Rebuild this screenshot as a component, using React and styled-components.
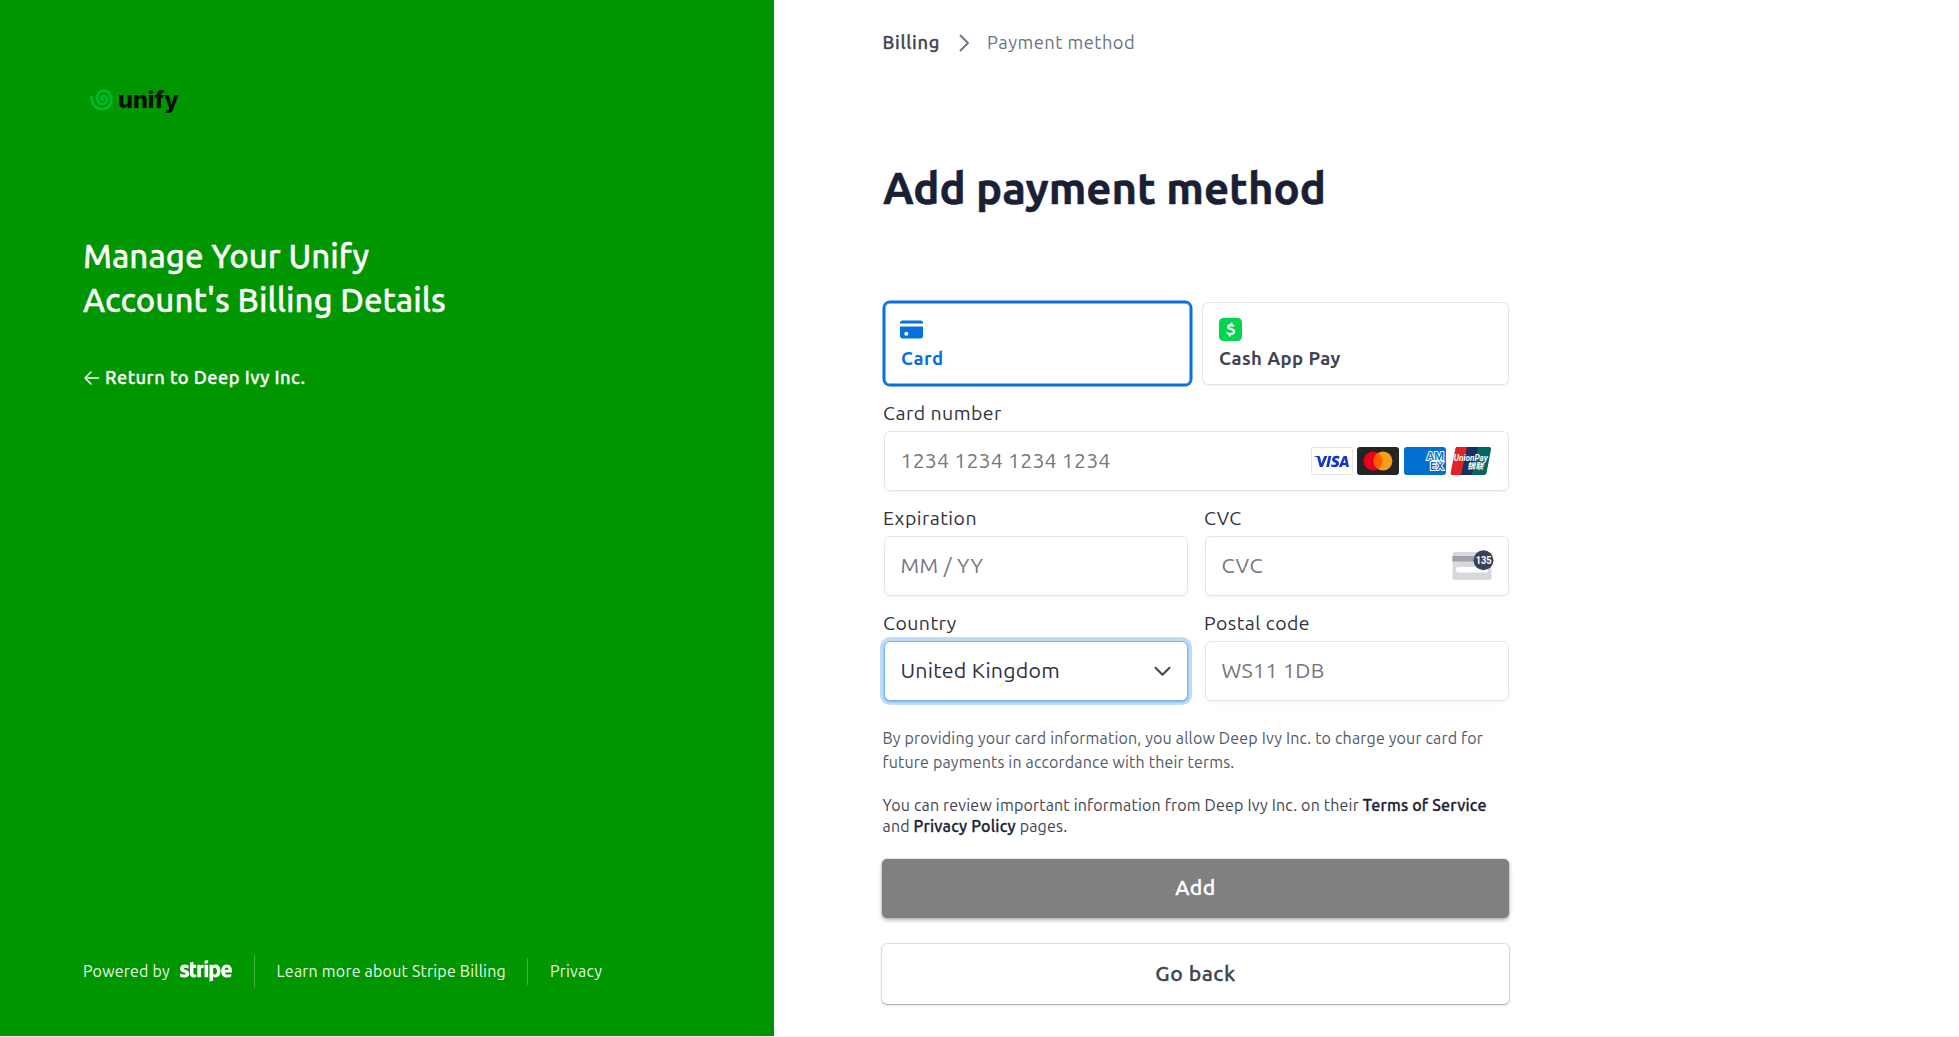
import React from 'react';
import styled, { createGlobalStyle, css } from 'styled-components';
import { FaStripe } from 'react-icons/fa';
import { SiVisa } from 'react-icons/si';

const GlobalStyle = createGlobalStyle`
  *, *::before, *::after { box-sizing: border-box; }
  body {
    margin: 0;
    background: #fff;
    font-family: Ubuntu, "Noto Sans", "Open Sans", sans-serif;
    overflow: hidden;
  }
  h1, h2, p { margin: 0; }
  svg { display: block; flex: none; }
`;

const Page = styled.div`
  display: flex;
  height: 1037px;
  border-bottom: 1px solid #f3f3f4;
`;

const Track = styled.span`
  letter-spacing: ${({ $by }) => $by}px;
`;

const sturdy = css`
  font-weight: 500;
  -webkit-text-stroke: 0.3px currentColor;
`;

/* ---------- Brand panel ---------- */

const Sidebar = styled.aside`
  display: flex;
  flex-direction: column;
  flex: none;
  width: 774px;
  padding: 88px 0 48px 83px;
  background: #009600;
  box-shadow: inset -14px 0 14px -14px rgba(0, 60, 0, 0.12);
  color: #fff;
`;

const Brand = styled.div`
  display: flex;
  align-items: center;
  gap: 5px;
  height: 24px;
  padding-left: 7px;
  color: #0a0f0a;
  font: 800 23.5px/24px Inter, sans-serif;
`;

const Headline = styled.h2`
  ${sturdy}
  margin-top: 122px;
  font-size: 33px;
  line-height: 43.5px;
  white-space: nowrap;
`;

const ReturnLink = styled.a`
  ${sturdy}
  display: flex;
  align-items: center;
  gap: 6px;
  margin-top: 43.5px;
  font-size: 18.3px;
  line-height: 24px;
  letter-spacing: 0.45px;

  svg { margin: 3px 0 0 1px; }
`;

const Footer = styled.footer`
  display: flex;
  align-items: center;
  height: 34px;
  margin-top: auto;
  color: rgba(255, 255, 255, 0.94);
  font-size: 16px;
  line-height: 34px;
  letter-spacing: 0.21px;
  white-space: nowrap;
`;

const Powered = styled.div`
  display: flex;
  align-items: center;
  gap: 10px;
  height: 33px;
  padding-right: 22px;
  border-right: 1px solid rgba(255, 255, 255, 0.25);
`;

const StripeMark = styled(FaStripe)`
  width: 52px;
  height: 41.5px;
  color: #fff;
`;

const FooterLink = styled.a`
  padding: 0 21.5px;
`;

const ShortRule = styled.span`
  width: 1px;
  height: 27px;
  background: rgba(255, 255, 255, 0.25);
`;

/* ---------- Payment form ---------- */

const Main = styled.main`
  display: flex;
  flex-direction: column;
  width: 735px;
  padding: 30px 0 0 110px;
`;

const Breadcrumb = styled.nav`
  display: flex;
  align-items: center;
  height: 25px;
  margin-left: -1.5px;
  color: #414552;
  font-size: 18.3px;
  line-height: 25px;
  white-space: nowrap;

  svg { margin: 0 17.5px 0 18.5px; }
`;

const Crumb = styled.a`
  ${sturdy}
  letter-spacing: 0.7px;
`;

const Current = styled.span`
  color: #6a7383;
  font-weight: 400;
  letter-spacing: 0.47px;
`;

const Title = styled.h1`
  margin: 105px 0 86px -1px;
  color: #1a1f36;
  font-size: 43.7px;
  font-weight: 700;
  line-height: 56px;
  -webkit-text-stroke: 0.5px currentColor;
  white-space: nowrap;
`;

const boxed = css`
  border: 1px solid #e6e6e6;
  border-radius: 6px;
  background: #fff;
  box-shadow: 0 1px 1px rgba(0, 0, 0, 0.03), 0 3px 7px rgba(0, 0, 0, 0.025);
`;

const Methods = styled.div`
  display: grid;
  grid-template-columns: 1fr 1fr;
  gap: 11px;
`;

const Method = styled.div`
  ${boxed}
  display: flex;
  flex-direction: column;
  gap: 4.5px;
  height: 83px;
  padding: 15px 16px 0;
  color: #414552;
  font-size: 18.5px;
  font-weight: 700;
  line-height: 24px;

  ${({ $selected }) =>
    $selected &&
    css`
      color: #0570de;
      border-color: #0570de;
      box-shadow: 0 0 0 1.5px #0570de, inset 0 0 0 0.5px #0570de, 0 3px 8px rgba(0, 0, 0, 0.04);

      svg { margin-left: -1px; }
    `}
`;

const Fields = styled.div`
  display: grid;
  grid-template-columns: 304px 304px;
  column-gap: 17px;
  row-gap: 14px;
  margin-top: 15px;
`;

const FieldBox = styled.label`
  grid-column: ${({ $wide }) => ($wide ? '1 / -1' : 'auto')};
  display: flex;
  flex-direction: column;
  gap: 6px;
`;

const Label = styled.span`
  height: 25px;
  margin-left: -1px;
  color: #30313d;
  font-size: 19.5px;
  line-height: 26px;
  letter-spacing: 0.45px;
`;

const Control = styled.span`
  ${boxed}
  display: flex;
  align-items: center;
  justify-content: space-between;
  height: 60px;
  padding: 0 16px 0 15.5px;
  color: ${({ $filled }) => ($filled ? '#30313d' : '#757680')};
  font-size: 21.4px;
  line-height: 28px;

  ${({ $focused }) =>
    $focused &&
    css`
      border-color: #7db4ee;
      box-shadow: 0 0 0 4px rgba(5, 112, 222, 0.25), 0 1px 2px rgba(5, 112, 222, 0.4);
    `}
`;

const Value = styled.span`
  padding-bottom: 2.5px;
  letter-spacing: ${({ $by }) => $by}px;
`;

const Brands = styled.span`
  display: flex;
  gap: 4.5px;
`;

const VisaCard = styled.span`
  display: flex;
  align-items: center;
  justify-content: center;
  width: 42px;
  height: 28px;
  border: 1px solid #e3e3e6;
  border-radius: 3px;
  color: #1434cb;

  svg { width: 35px; height: 35px; }
`;

const Terms = styled.p`
  margin: 26px 0 0 -1.5px;
  color: #545969;
  font-size: 16px;
  line-height: 23.75px;
  letter-spacing: 0.17px;
  white-space: nowrap;
`;

const Review = styled.p`
  margin: 20.5px 0 0 -1.5px;
  color: #414552;
  font-size: 16px;
  line-height: 21.4px;
  letter-spacing: 0.18px;
  white-space: nowrap;
`;

const Strong = styled.a`
  color: #1a1f36;
  ${sturdy}
`;

const Button = styled.button`
  display: flex;
  align-items: center;
  justify-content: center;
  width: 627px;
  height: ${({ $primary }) => ($primary ? 59 : 60)}px;
  margin: ${({ $primary }) => ($primary ? 21.5 : 26)}px 0 0 -2px;
  padding: 0 0 3px;
  border: 0;
  border-radius: 5px;
  font: 500 21.2px/28px Ubuntu, "Noto Sans", sans-serif;
  -webkit-text-stroke: 0.3px currentColor;
  letter-spacing: 0.5px;
  color: ${({ $primary }) => ($primary ? '#fff' : '#414552')};
  background: ${({ $primary }) => ($primary ? '#808080' : '#fff')};
  box-shadow: ${({ $primary }) =>
    $primary
      ? '0 0 0 1px rgba(60, 66, 87, 0.1), 0 2px 4px rgba(0, 0, 0, 0.3)'
      : '0 0 0 1px rgba(60, 66, 87, 0.16), 0 1px 1px rgba(0, 0, 0, 0.22), 0 2px 5px rgba(60, 66, 87, 0.08)'};
`;

/* ---------- Icons ---------- */

const Spiral = () => (
  <svg width="23" height="22" viewBox="0 0 23 22" fill="none" stroke="#00b930" strokeWidth="2.7" strokeLinecap="round">
    <path d="M1.5 7.5C1.5 15 6 20 12 20c6 0 9.5-4.6 9.5-9.6C21.5 5.2 18 1.6 13.8 1.7 9.600 1.900 6.900 5 7 9c.2 3.800 2.700 6.200 5.700 6 3-.2 4.700-2.500 4.400-5.200C16.800 7.200 13.800 6 12 7.600c-1.200 1.200-.8 2.800.7 3" />
  </svg>
);

const ArrowLeft = () => (
  <svg width="15" height="14" viewBox="0 0 15 14" fill="none" stroke="#fff" strokeWidth="1.5" strokeLinecap="round" strokeLinejoin="round">
    <path d="M14.5 7H1M7 1L1 7l6 6" />
  </svg>
);

const ChevronRight = () => (
  <svg width="11" height="18" viewBox="0 0 11 18" fill="none" stroke="#6a7383" strokeWidth="1.8" strokeLinecap="round" strokeLinejoin="round">
    <path d="M1.5 1.5L9 9l-7.5 7.5" />
  </svg>
);

const ChevronDown = () => (
  <svg width="17" height="11" viewBox="0 0 17 11" fill="none" stroke="#414552" strokeWidth="2" strokeLinecap="round" strokeLinejoin="round">
    <path d="M1.5 1.8l7 7 7-7" />
  </svg>
);

const CardIcon = () => (
  <svg width="23" height="23" viewBox="0 0 23 23" fill="#0570de">
    <path d="M0 5.5V5a2.5 2.5 0 0 1 2.5-2.5h18A2.5 2.5 0 0 1 23 5v.5z" />
    <path fillRule="evenodd" d="M0 8.5h23v9.3a2.6 2.6 0 0 1-2.6 2.6H2.6A2.6 2.6 0 0 1 0 17.800zM6.300 13.700a2 2 0 1 0 0 4 2 2 0 0 0 0-4z" />
  </svg>
);

const CashIcon = () => (
  <svg width="23" height="23" viewBox="0 0 23 23">
    <rect width="23" height="23" rx="4.5" fill="#00d64b" />
    <path
      d="M15 8.3c-.9-.8-2-1.2-3.300-1.200-1.500 0-2.600.6-2.600 1.800 0 2.700 6 1.300 6 4.600 0 1.500-1.400 2.500-3.500 2.500-1.500 0-2.900-.5-3.900-1.500M12.700 4.600l-.5 2.500M10.900 16l-.5 2.500"
      fill="none" stroke="#fff" strokeWidth="2.2" strokeLinejoin="round"
    />
  </svg>
);

const Mastercard = () => (
  <svg width="42" height="28" viewBox="0 0 42 28">
    <rect width="42" height="28" rx="3" fill="#252525" />
    <circle cx="16" cy="14" r="9.4" fill="#eb001b" />
    <circle cx="26" cy="14" r="9.4" fill="#f79e1b" />
    <path d="M21 6a9.4 9.4 0 0 1 0 16 9.4 9.4 0 0 1 0-16z" fill="#ff5f00" />
  </svg>
);

const Amex = () => (
  <svg width="42" height="28" viewBox="0 0 42 28">
    <rect width="42" height="28" rx="3" fill="#016fd0" />
    <text
      fill="#016fd0" stroke="#fff" strokeWidth="2" paintOrder="stroke" fontFamily="Inter, sans-serif"
      fontWeight="600" fontSize="10"
    >
      <tspan x="22.5" y="12.7" fontSize="10.5">AM</tspan>
      <tspan x="26" y="22.7" fontSize="10.5">EX</tspan>
    </text>
  </svg>
);

const UnionPay = () => (
  <svg width="42" height="28" viewBox="0 0 42 28">
    <path d="M6.5 0H19l-6 28H2.5C1 28 .4 27 .7 25.7L5.3 2C5.5.8 6 0 6.5 0z" fill="#dd2428" />
    <path d="M17 0h13l-6 28H11z" fill="#17305f" />
    <path d="M28 0h11c1.6 0 2.3 1 2 2.4L36.5 26c-.3 1.2-1.2 2-2.5 2H22z" fill="#01675f" />
    <text fill="#fff" fontStyle="italic" fontWeight="700" fontFamily="Roboto, 'Noto Sans CJK SC', sans-serif">
      <tspan x="3.8" y="14" fontSize="8.2">UnionPay</tspan>
      <tspan x="17" y="22" fontSize="8.2">银联</tspan>
    </text>
  </svg>
);

const CvcIcon = () => (
  <svg width="42" height="32" viewBox="0 0 42 32">
    <rect x="0.5" y="2" width="39" height="28" rx="3" fill="#d6d8dd" />
    <path d="M.5 6h39v5.5H.5z" fill="#9fa2ab" />
    <rect x="4" y="17" width="32" height="5.5" rx="2" fill="#fff" />
    <circle cx="31.5" cy="10.2" r="10" fill="#3a4158" />
    <text x="23.7" y="14.2" fill="#fff" fontFamily="Roboto, sans-serif" fontWeight="700" fontSize="11" textLength="16" lengthAdjust="spacingAndGlyphs">135</text>
  </svg>
);

const CvcSlot = styled.span`
  margin-right: -2px;
`;

/* ---------- Page ---------- */

const Field = ({ label, value, track, icon, wide, focused, filled }) => (
  <FieldBox $wide={wide}>
    <Label>{label}</Label>
    <Control $focused={focused} $filled={filled}>
      <Value $by={track}>{value}</Value>
      {icon}
    </Control>
  </FieldBox>
);

const CardBrands = () => (
  <Brands>
    <VisaCard><SiVisa /></VisaCard>
    <Mastercard />
    <Amex />
    <UnionPay />
  </Brands>
);

export default function App() {
  return (
    <>
      <GlobalStyle />
      <Page>
        <Sidebar>
          <Brand><Spiral />unify</Brand>
          <Headline>
            Manage Your Unify
            <br />
            Account's Billing Details
          </Headline>
          <ReturnLink><ArrowLeft />Return to Deep Ivy Inc.</ReturnLink>
          <Footer>
            <Powered>Powered by<StripeMark /></Powered>
            <FooterLink>Learn more about Stripe Billing</FooterLink>
            <ShortRule />
            <FooterLink>Privacy</FooterLink>
          </Footer>
        </Sidebar>
        <Main>
          <Breadcrumb>
            <Crumb>Billing</Crumb>
            <ChevronRight />
            <Current>Payment method</Current>
          </Breadcrumb>
          <Title>Add payment method</Title>
          <Methods>
            <Method $selected><CardIcon /><Track $by={0.5}>Card</Track></Method>
            <Method><CashIcon /><Track $by={0.44}>Cash App Pay</Track></Method>
          </Methods>
          <Fields>
            <Field wide label="Card number" value="1234 1234 1234 1234" track={0.12} icon={<CardBrands />} />
            <Field label="Expiration" value="MM / YY" track={0.35} />
            <Field label="CVC" value="CVC" track={0.6} icon={<CvcSlot><CvcIcon /></CvcSlot>} />
            <Field label="Country" value="United Kingdom" track={0.23} focused filled icon={<ChevronDown />} />
            <Field label="Postal code" value="WS11 1DB" track={0.3} />
          </Fields>
          <Terms>
            By providing your card information, you allow Deep Ivy Inc. to charge your card for
            <br />
            future payments in accordance with their terms.
          </Terms>
          <Review>
            You can review important information from Deep Ivy Inc. on their <Strong>Terms of Service</Strong>
            <br />
            and <Strong>Privacy Policy</Strong> pages.
          </Review>
          <Button $primary>Add</Button>
          <Button>Go back</Button>
        </Main>
      </Page>
    </>
  );
}
